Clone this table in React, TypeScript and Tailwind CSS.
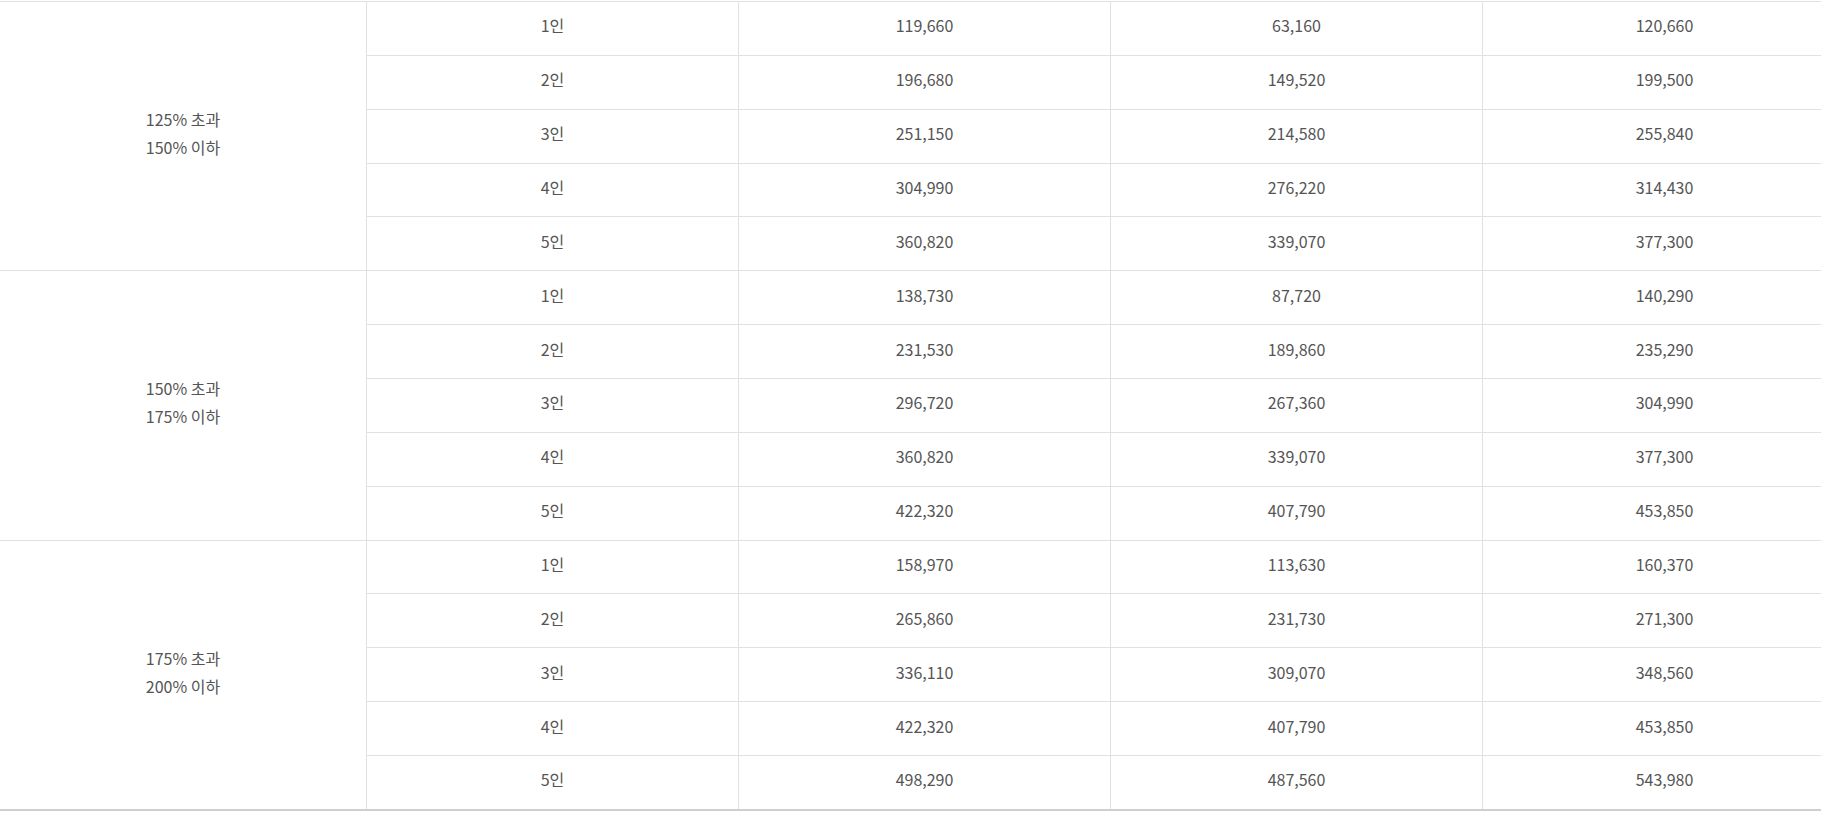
import React from "react";

type Group = { label: [string, string]; rows: [string, string, string, string][] };

const groups: Group[] = [
  {
    label: ["125% 초과", "150% 이하"],
    rows: [
      ["1인", "119,660", "63,160", "120,660"],
      ["2인", "196,680", "149,520", "199,500"],
      ["3인", "251,150", "214,580", "255,840"],
      ["4인", "304,990", "276,220", "314,430"],
      ["5인", "360,820", "339,070", "377,300"],
    ],
  },
  {
    label: ["150% 초과", "175% 이하"],
    rows: [
      ["1인", "138,730", "87,720", "140,290"],
      ["2인", "231,530", "189,860", "235,290"],
      ["3인", "296,720", "267,360", "304,990"],
      ["4인", "360,820", "339,070", "377,300"],
      ["5인", "422,320", "407,790", "453,850"],
    ],
  },
  {
    label: ["175% 초과", "200% 이하"],
    rows: [
      ["1인", "158,970", "113,630", "160,370"],
      ["2인", "265,860", "231,730", "271,300"],
      ["3인", "336,110", "309,070", "348,560"],
      ["4인", "422,320", "407,790", "453,850"],
      ["5인", "498,290", "487,560", "543,980"],
    ],
  },
];

export default function App() {
  return (
    <div
      className="w-full h-[817px] overflow-hidden bg-white text-[#555] text-[16px]"
      style={{ fontFamily: '"Noto Sans CJK KR", "Noto Sans", sans-serif' }}
    >
      <div className="w-[1846px] mt-px border-t border-[#e1e1e1]">
        {groups.map((g, gi) => (
          <div
            key={gi}
            className={
              gi === groups.length - 1
                ? "flex border-b-2 border-[#cfcfcf]"
                : "flex border-b border-[#e1e1e1]"
            }
          >
            <div className="w-[367px] shrink-0 border-r border-[#e1e1e1] flex flex-col items-center justify-center leading-[28px] pb-[6px]">
              <span>{g.label[0]}</span>
              <span>{g.label[1]}</span>
            </div>
            <div className="flex-1 flex flex-col">
              {g.rows.map((r, ri) => (
                <div
                  key={ri}
                  className={
                    ri === g.rows.length - 1
                      ? "flex h-[52.87px] items-stretch"
                      : "flex h-[53.87px] items-stretch border-b border-[#e1e1e1]"
                  }
                >
                  {r.map((c, ci) => (
                    <div
                      key={ci}
                      className={
                        ci < 3
                          ? "w-[372px] shrink-0 border-r border-[#e1e1e1] flex items-center justify-center pb-[6px]"
                          : "flex-1 flex items-center justify-center pb-[6px]"
                      }
                    >
                      {c}
                    </div>
                  ))}
                </div>
              ))}
            </div>
          </div>
        ))}
      </div>
    </div>
  );
}
